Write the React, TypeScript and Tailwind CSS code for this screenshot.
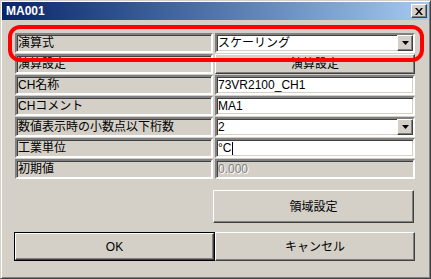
import React from 'react';

const sunken =
  'border-2 border-t-[#808080] border-l-[#808080] border-b-white border-r-white shadow-[inset_1px_1px_0_#404040,inset_-1px_-1px_0_#d4d0c8]';
const raised =
  'border border-t-white border-l-white border-b-[#404040] border-r-[#404040] shadow-[inset_-1px_-1px_0_#808080]';

const Arrow = () => (
  <svg width="7" height="4" viewBox="0 0 7 4">
    <path d="M0 0h7L3.5 4z" fill="#000" />
  </svg>
);

const Label: React.FC<{ text: string }> = ({ text }) => (
  <div className={`${sunken} h-[20px] bg-[#d4d0c8] flex items-center pl-[1px] leading-none`}>{text}</div>
);

const Input: React.FC<{ children: React.ReactNode; disabled?: boolean }> = ({ children, disabled }) => (
  <div
    className={`${sunken} h-[20px] flex items-center pl-[1px] leading-none ${disabled ? 'bg-[#d4d0c8] text-[#808080]' : 'bg-white text-black'}`}
  >
    {children}
  </div>
);

const Combo: React.FC<{ value: string }> = ({ value }) => (
  <div className={`${sunken} h-[20px] bg-white flex items-center leading-none`}>
    <span className="flex-1 pl-[1px]">{value}</span>
    <div className={`${raised} w-[16px] h-[16px] bg-[#d4d0c8] flex items-center justify-center`}>
      <Arrow />
    </div>
  </div>
);

export default function App() {
  return (
    <div
      className="relative w-[431px] h-[279px] bg-[#d4d0c8] border border-t-[#d4d0c8] border-l-[#d4d0c8] border-b-[#404040] border-r-[#404040] shadow-[inset_1px_1px_0_#fff,inset_-1px_-1px_0_#808080] p-[1px] text-[12px] text-black"
      style={{ fontFamily: '"Liberation Sans", "Noto Sans CJK JP", sans-serif' }}
    >
      {/* title bar */}
      <div className="h-[18px] bg-gradient-to-r from-[#0a246a] to-[#a6caf0] flex items-center justify-between pl-[4px] pr-[2px]">
        <span className="text-white font-bold text-[12px] leading-none">MA001</span>
        <div className={`${raised} w-[16px] h-[14px] bg-[#d4d0c8] flex items-center justify-center`}>
          <svg width="8" height="7" viewBox="0 0 8 7">
            <path d="M0 0h2l2 2.5L6 0h2L5 3.5 8 7H6L4 4.5 2 7H0l3-3.5z" fill="#000" />
          </svg>
        </div>
      </div>

      {/* body */}
      <div className="pl-[13px] pt-[13px]">
        <div className="grid grid-cols-[198px_200px] gap-x-[2px] gap-y-[1px]">
          <Label text="演算式" />
          <Combo value="スケーリング" />

          <Label text="演算設定" />
          <div className={`${raised} h-[20px] bg-[#d4d0c8] flex items-center justify-center leading-none`}>演算設定</div>

          <Label text="CH名称" />
          <Input>73VR2100_CH1</Input>

          <Label text="CHコメント" />
          <Input>MA1</Input>

          <Label text="数値表示時の小数点以下桁数" />
          <Combo value="2" />

          <Label text="工業単位" />
          <Input>
            °C<span className="inline-block w-[1px] h-[13px] bg-black ml-[1px]" />
          </Input>

          <Label text="初期値" />
          <Input disabled>
            <span className="[text-shadow:1px_1px_0_#fff]">0.000</span>
          </Input>
        </div>

        <div className="mt-[11px] ml-[198px] w-[201px]">
          <button className={`${raised} w-full h-[33px] bg-[#d4d0c8] flex items-center justify-center`}>領域設定</button>
        </div>

        <div className="mt-[9px] -ml-[1px] flex">
          <button className="w-[201px] h-[29px] border border-black bg-[#d4d0c8]">
            <div className={`${raised} w-full h-full flex items-center justify-center`}>OK</div>
          </button>
          <button className={`${raised} w-[200px] h-[29px] bg-[#d4d0c8] flex items-center justify-center`}>キャンセル</button>
        </div>
      </div>

      {/* red annotation */}
      <div className="absolute left-[7px] top-[24px] w-[416px] h-[37px] border-[4px] border-[#ff0000] rounded-[12px] pointer-events-none" />
    </div>
  );
}
